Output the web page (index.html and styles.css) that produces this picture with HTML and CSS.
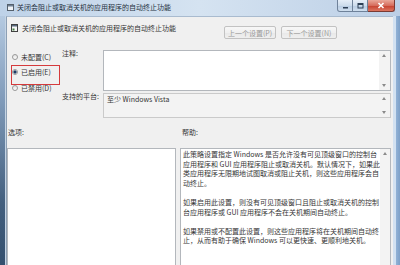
FILE: index.html
```html
<!DOCTYPE html>
<html>
    <head>
        <meta charset="utf-8">
        <link rel="stylesheet" href="styles.css">
    </head>
    <body>
        <div class="window">
            <div class="titlebar">
                <svg class="app-icon" width="7" height="7" viewBox="0 0 7 7">
                    <rect x="0.5" y="0.5" width="6" height="6" fill="#eef2f6" stroke="#55606c"/>
                    <rect x="1" y="1" width="5" height="1.5" fill="#6d7f93"/>
                </svg>
                <span class="caption">关闭会阻止或取消关机的应用程序的自动终止功能</span>
                <div class="controls">
                    <span class="ctl min">
                        <svg width="7" height="6" viewBox="0 0 7 6"><rect x="1" y="4" width="5" height="1.5" fill="#2c3e55"/></svg>
                    </span>
                    <span class="ctl max">
                        <svg width="7" height="6" viewBox="0 0 7 6"><rect x="1" y="0.5" width="5" height="4.5" fill="none" stroke="#2c3e55"/><rect x="1" y="0.5" width="5" height="1.5" fill="#2c3e55"/></svg>
                    </span>
                    <span class="ctl close">
                        <svg width="8" height="7" viewBox="0 0 8 7"><path d="M1.5 1 L6.5 6 M6.5 1 L1.5 6" stroke="#fff" stroke-width="1.6"/></svg>
                    </span>
                </div>
            </div>

            <div class="frame left"></div>

            <div class="client">
                <div class="head">
                    <svg class="policy-icon" width="7" height="8" viewBox="0 0 7 8">
                        <rect x="0.5" y="0.5" width="6" height="7" fill="#f6f6f6" stroke="#404040"/>
                        <rect x="1" y="1" width="5" height="1.5" fill="#56687d"/>
                        <rect x="1.5" y="4.5" width="2" height="2" fill="#3f7d3c"/>
                    </svg>
                    <span class="head-title">关闭会阻止或取消关机的应用程序的自动终止功能</span>
                    <div class="nav">
                        <button class="prev" disabled>上一个设置(P)</button>
                        <button class="next" disabled>下一个设置(N)</button>
                    </div>
                </div>

                <div class="settings">
                    <div class="radios">
                        <label class="radio"><span class="dot"></span>未配置(C)</label>
                        <label class="radio checked marked"><span class="dot"></span>已启用(E)</label>
                        <label class="radio"><span class="dot"></span>已禁用(D)</label>
                    </div>

                    <span class="field-label">注释:</span>
                    <div class="box comment">
                        <div class="box-body"></div>
                        <div class="scroll"><span class="arrow up"></span><span class="arrow down"></span></div>
                    </div>

                    <span class="field-label">支持的平台:</span>
                    <div class="box platform">
                        <div class="box-body">至少 Windows Vista</div>
                        <div class="scroll"><span class="arrow up"></span><span class="arrow down"></span></div>
                    </div>
                </div>

                <div class="panes">
                    <span class="pane-label">选项:</span>
                    <span class="pane-label help-label">帮助:</span>
                    <div class="box options"></div>
                    <div class="box help">
                        <div class="box-body">
                            <p>此策略设置指定 Windows 是否允许没有可见顶级窗口的控制台<br>应用程序和 GUI 应用程序阻止或取消关机。默认情况下，如果此<br>类应用程序无限期地试图取消或阻止关机，则这些应用程序会自<br>动终止。</p>
                            <p>如果启用此设置，则没有可见顶级窗口且阻止或取消关机的控制<br>台应用程序或 GUI 应用程序不会在关机期间自动终止。</p>
                            <p>如果禁用或不配置此设置，则这些应用程序将在关机期间自动终<br>止，从而有助于确保 Windows 可以更快速、更顺利地关机。</p>
                        </div>
                        <div class="scroll"><span class="arrow up"></span></div>
                    </div>
                </div>
            </div>

            <div class="frame right"></div>
        </div>
    </body>
</html>
```

FILE: styles.css
```css
* {
    margin: 0;
    padding: 0;
    box-sizing: border-box;
}

body {
    width: 400px;
    height: 265px;
    overflow: hidden;
    font-family: "Noto Sans CJK SC", "Noto Sans", sans-serif;
    font-size: 7px;
    color: #363636;
}

/* window frame */
.window {
    display: grid;
    grid-template-columns: 6px 387px 7px;
    grid-template-rows: 16px 249px;
    width: 400px;
    height: 265px;
    background: #bcd1e8;
}

.titlebar {
    grid-column: 1 / -1;
    display: flex;
    align-items: flex-start;
    padding-left: 7px;
    background: linear-gradient(to right, #bed2e8, #d5e3f1 50%, #bccfe6);
}
.app-icon {
    margin-top: 4px;
}
.caption {
    margin-left: 3px;
    line-height: 14px;
    color: #26323f;
}

.controls {
    display: flex;
    height: 12px;
    margin-left: auto;
    margin-right: 5px;
}
.ctl {
    display: flex;
    justify-content: center;
    align-items: center;
    border: 1px solid #6f829a;
    border-top: none;
    background: linear-gradient(#e6eef8, #cddcec 50%, #b7cbe2 51%, #d0dfef);
}
.ctl.min {
    width: 16px;
    border-radius: 0 0 0 3px;
}
.ctl.max {
    width: 15px;
    border-left: none;
}
.ctl.close {
    width: 27px;
    border-left: none;
    border-color: #7a3a33;
    border-radius: 0 0 3px 0;
    background: linear-gradient(#e9a89a, #d66d5d 50%, #c53f2d 51%, #dc7560);
}

.frame.left {
    background: linear-gradient(#b5cae1, #7e99b8 35%, #435f7e 75%, #34506f);
    border-right: 1px solid #c5d4e4;
}
.frame.right {
    background: linear-gradient(to right, #d2e1f1 0, #d2e1f1 3px, #92b2d6 3px, #7da0c8);
}

/* client area */
.client {
    background: #f0f0f0;
    border-left: 1px solid #8c9fb4;
    border-top: 1px solid #a9bbcf;
    overflow: hidden;
}

.head {
    display: flex;
    align-items: flex-start;
    height: 33px;
    padding: 7px 0 0 4px;
}
.head-title {
    margin-left: 4px;
    line-height: 8px;
}
.nav {
    display: flex;
    gap: 5px;
    margin-left: auto;
    margin-right: 56px;
    margin-top: 2px;
}
.nav button {
    height: 13px;
    font: inherit;
    font-size: 7px;
    color: #999;
    border: 1px solid #c2c2c2;
    border-radius: 2px;
    background: linear-gradient(#f7f7f7, #f0f0f0 50%, #e8e8e8 51%, #efefef);
}
.nav .prev {
    width: 52px;
}
.nav .next {
    width: 56px;
}

/* state + comment + platform */
.settings {
    display: grid;
    grid-template-columns: 55px 41px 288px;
    grid-template-rows: 41px 25px;
    row-gap: 2px;
}
.radios {
    grid-row: 1 / 3;
    margin-top: -1px;
}
.radio {
    position: relative;
    display: flex;
    align-items: center;
    gap: 3px;
    height: 15px;
    padding-left: 5px;
}
.radio:last-child {
    margin-top: 1px;
}
.dot {
    width: 6px;
    height: 6px;
    border-radius: 50%;
    border: 1px solid #999;
    background: linear-gradient(#e2e2e2, #ffffff);
}
.radio.checked .dot {
    background: radial-gradient(circle, #1d3c66 0, #1d3c66 1.3px, #ffffff 2px);
}
.radio.marked::after {
    content: '';
    position: absolute;
    left: 4px;
    top: 1px;
    width: 47px;
    height: 17.5px;
    border: 1.5px solid #d53a3c;
}

.field-label {
    line-height: 8px;
    margin-top: -1px;
}

.box {
    display: flex;
    border: 1px solid #b3b7bc;
    background: #fff;
}
.box-body {
    flex: 1;
}
.scroll {
    width: 11px;
    display: flex;
    flex-direction: column;
    justify-content: space-between;
    background: #f3f3f3;
}
.arrow {
    display: block;
    height: 9px;
    position: relative;
}
.arrow::before {
    content: '';
    position: absolute;
    left: 3px;
    top: 3px;
    border-left: 2.5px solid transparent;
    border-right: 2.5px solid transparent;
}
.arrow.up::before {
    border-bottom: 3px solid #8a8a8a;
}
.arrow.down::before {
    border-top: 3px solid #8a8a8a;
}

.platform {
    background: #f3f3f3;
    border-color: #cacaca;
}
.platform .box-body {
    padding: 1px 0 0 3px;
    line-height: 8px;
}

/* options + help */
.panes {
    display: grid;
    grid-template-columns: 169px 211px;
    grid-template-rows: 8px 125px;
    column-gap: 4px;
    row-gap: 12px;
    padding-top: 10px;
}
.pane-label {
    line-height: 8px;
    padding-left: 1px;
}
.help-label {
    padding-left: 2px;
}
.help .box-body {
    padding: 1px 0 0 2px;
    line-height: 9.6px;
    white-space: nowrap;
}
.help p {
    margin-bottom: 9.6px;
}
.help .scroll {
    width: 10px;
    justify-content: flex-start;
}
```
